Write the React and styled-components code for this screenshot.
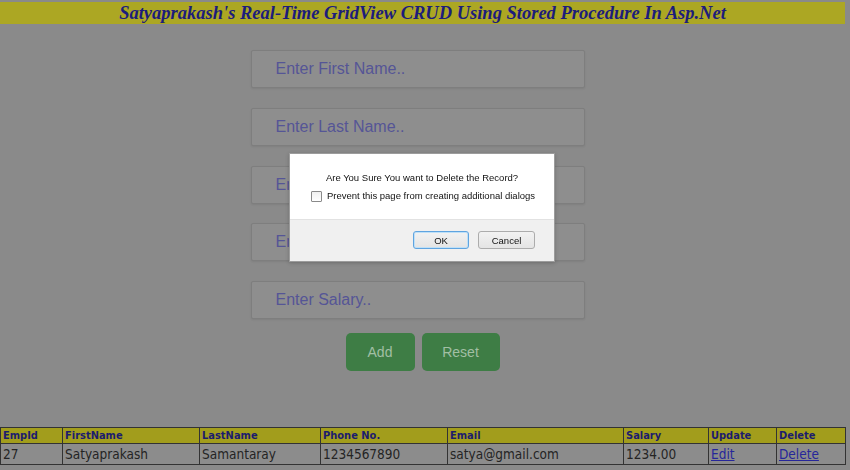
import React from "react";
import styled, { createGlobalStyle } from "styled-components";

const GlobalStyle = createGlobalStyle`
  html, body {
    margin: 0;
    padding: 0;
    background: #8a8a8a;
  }
`;

const Page = styled.div`
  width: 845px;
  height: 470px;
  padding-top: 2px;
  box-sizing: border-box;
  display: flex;
  flex-direction: column;
  font-family: "Liberation Sans", Arial, sans-serif;
`;

const TitleBar = styled.h1`
  margin: 0;
  height: 22px;
  background: #aca723;
  color: #1c1c7c;
  font-family: "Liberation Serif", "Times New Roman", serif;
  font-style: italic;
  font-weight: bold;
  font-size: 18.5px;
  line-height: 22px;
  text-align: center;
`;

const Form = styled.div`
  display: flex;
  flex-direction: column;
  align-items: center;
  gap: 19.75px;
  margin-top: 26px;
  padding-right: 10px;
`;

const TextBox = styled.input`
  width: 334px;
  height: 38px;
  box-sizing: border-box;
  padding: 0 24px;
  background: #8e8e8e;
  border: 1px solid #7e7e7e;
  border-radius: 2px;
  box-shadow: 0 1px 2px rgba(0, 0, 0, 0.08);
  font-family: "Liberation Sans", Arial, sans-serif;
  font-size: 16px;
  outline: none;

  &::placeholder {
    color: #555596;
  }
`;

const ButtonRow = styled.div`
  display: flex;
  gap: 7px;
  margin-top: -6px;
  margin-left: 10px;
`;

const GreenButton = styled.button`
  width: ${(p) => p.$w}px;
  height: 38px;
  border: none;
  border-radius: 5px;
  background: #3e7d45;
  color: #a2bfa4;
  font-family: "Liberation Sans", Arial, sans-serif;
  font-size: 14px;
`;

const Grid = styled.table`
  margin-top: auto;
  margin-bottom: 5px;
  width: 845px;
  border-collapse: collapse;
  table-layout: fixed;
  border: 1px solid #333;
`;

const HeadCell = styled.th`
  height: 15px;
  padding: 0 2px;
  background: #a29d1c;
  border: 1px solid #333;
  color: #1c1c6e;
  font-family: "DejaVu Sans Condensed", "DejaVu Sans", Verdana, sans-serif;
  font-size: 11px;
  font-weight: bold;
  text-align: left;
  line-height: 14px;
`;

const Cell = styled.td`
  height: 20px;
  padding: 0 2px;
  background: #8c8c8c;
  border: 1px solid #333;
  color: #242424;
  font-family: "DejaVu Sans Condensed", "DejaVu Sans", Verdana, sans-serif;
  font-size: 13.5px;
  line-height: 19px;
  white-space: nowrap;
`;

const GridLink = styled.a`
  color: #26269a;
  text-decoration: underline;
`;

const Backdrop = styled.div`
  position: fixed;
  inset: 0;
`;

const Dialog = styled.div`
  position: absolute;
  left: 289px;
  top: 153px;
  width: 266px;
  height: 109px;
  box-sizing: border-box;
  border: 1px solid #9c9c9c;
  background: #fff;
  box-shadow: 0 1px 4px rgba(0, 0, 0, 0.2);
  display: flex;
  flex-direction: column;
  font-family: "Liberation Sans", Arial, sans-serif;
  font-size: 9.5px;
  color: #111;
`;

const DialogBody = styled.div`
  height: 65px;
  box-sizing: border-box;
  padding: 18px 0 0 21px;
  display: flex;
  flex-direction: column;
  gap: 6px;
`;

const Message = styled.div`
  text-align: center;
  margin-left: -21px;
  line-height: 12px;
`;

const CheckLabel = styled.label`
  display: flex;
  align-items: center;
  gap: 5px;
  line-height: 12px;
  white-space: nowrap;
`;

const Box = styled.span`
  width: 9px;
  height: 9px;
  border: 1px solid #8a8a8a;
  border-radius: 1px;
  background: linear-gradient(#f0f0f0, #fff);
`;

const DialogFooter = styled.div`
  flex: 1;
  background: #f0f0f0;
  border-top: 1px solid #e2e2e2;
  display: flex;
  justify-content: flex-end;
  align-items: flex-start;
  padding: 11px 19px 0 0;
  gap: 9px;
`;

const DialogButton = styled.button`
  width: ${(p) => p.$w}px;
  height: 18px;
  padding: 0;
  border: 1px solid ${(p) => (p.$focus ? "#5fa4e0" : "#acacac")};
  border-radius: 3px;
  background: linear-gradient(#f2f2f2, #e4e4e4);
  box-shadow: ${(p) => (p.$focus ? "inset 0 0 0 1px #bfe0f7" : "none")};
  font-family: "Liberation Sans", Arial, sans-serif;
  font-size: 9.5px;
  color: #111;
`;

const columns = [
  { title: "EmpId", width: 62 },
  { title: "FirstName", width: 137 },
  { title: "LastName", width: 121 },
  { title: "Phone No.", width: 127 },
  { title: "Email", width: 176 },
  { title: "Salary", width: 85 },
  { title: "Update", width: 68 },
  { title: "Delete", width: 69 },
];

const placeholders = [
  "Enter First Name..",
  "Enter Last Name..",
  "Enter Phone No..",
  "Enter Email..",
  "Enter Salary..",
];

export default function App() {
  return (
    <>
      <GlobalStyle />
      <Page>
        <TitleBar>Satyaprakash's Real-Time GridView CRUD Using Stored Procedure In Asp.Net</TitleBar>
        <Form>
          {placeholders.map((p) => (
            <TextBox key={p} placeholder={p} />
          ))}
          <ButtonRow>
            <GreenButton $w={69}>Add</GreenButton>
            <GreenButton $w={78}>Reset</GreenButton>
          </ButtonRow>
        </Form>
        <Grid>
          <colgroup>
            {columns.map((c) => (
              <col key={c.title} style={{ width: c.width }} />
            ))}
          </colgroup>
          <thead>
            <tr>
              {columns.map((c) => (
                <HeadCell key={c.title}>{c.title}</HeadCell>
              ))}
            </tr>
          </thead>
          <tbody>
            <tr>
              <Cell>27</Cell>
              <Cell>Satyaprakash</Cell>
              <Cell>Samantaray</Cell>
              <Cell>1234567890</Cell>
              <Cell>satya@gmail.com</Cell>
              <Cell>1234.00</Cell>
              <Cell><GridLink href="#">Edit</GridLink></Cell>
              <Cell><GridLink href="#">Delete</GridLink></Cell>
            </tr>
          </tbody>
        </Grid>
      </Page>
      <Backdrop>
        <Dialog>
          <DialogBody>
            <Message>Are You Sure You want to Delete the Record?</Message>
            <CheckLabel>
              <Box />
              Prevent this page from creating additional dialogs
            </CheckLabel>
          </DialogBody>
          <DialogFooter>
            <DialogButton $w={56} $focus>OK</DialogButton>
            <DialogButton $w={57}>Cancel</DialogButton>
          </DialogFooter>
        </Dialog>
      </Backdrop>
    </>
  );
}
